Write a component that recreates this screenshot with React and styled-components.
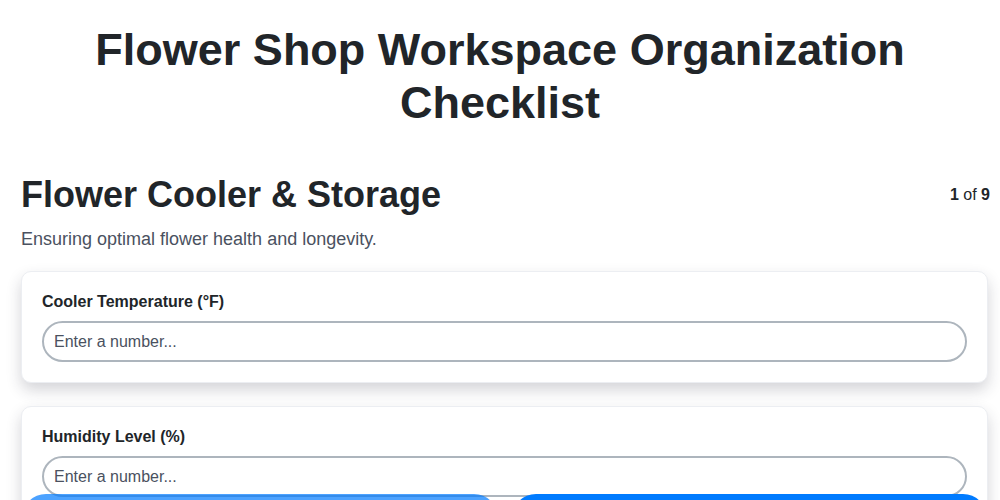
import styled, { createGlobalStyle } from "styled-components";

const GlobalStyle = createGlobalStyle`
  body {
    margin: 0;
    background: #ffffff;
    font-family: "Liberation Sans", Arial, sans-serif;
    color: #212529;
  }
  * { box-sizing: border-box; }
`;

const Page = styled.div`
  padding-bottom: 80px;
`;

const Title = styled.h1`
  margin: 23px 0 0;
  font-size: 45px;
  line-height: 53px;
  font-weight: 700;
  text-align: center;
  color: #212529;
`;

const Section = styled.section`
  padding: 0 10px 0 21px;
`;

const SectionHead = styled.div`
  display: flex;
  justify-content: space-between;
  align-items: center;
  margin-top: 44px;
`;

const SectionTitle = styled.h2`
  margin: 0;
  font-size: 36px;
  line-height: 44px;
  font-weight: 700;
`;

const Counter = styled.span`
  font-size: 16px;
  color: #212529;

  & b {
    font-weight: 700;
  }
`;

const Description = styled.p`
  margin: 11px 0 0;
  font-size: 18px;
  line-height: 22px;
  color: #4a5160;
`;

const Fields = styled.div`
  display: flex;
  flex-direction: column;
  gap: 23px;
  margin-top: 21px;
  padding-right: 2px;
`;

const Card = styled.div`
  background: #ffffff;
  border: 1px solid #eceef2;
  border-radius: 10px;
  padding: 21px 20px 20px;
  box-shadow: 0 7px 15px rgba(40, 40, 60, 0.2);
`;

const Label = styled.label`
  display: block;
  font-size: 16px;
  font-weight: 700;
  line-height: 18px;
  margin-bottom: 10px;
  color: #212529;
`;

const Input = styled.input`
  display: block;
  width: 100%;
  height: 41px;
  padding: 0 10px;
  border: 2px solid #adb5bd;
  border-radius: 21px;
  font-family: "Liberation Sans", Arial, sans-serif;
  font-size: 16px;
  color: #212529;
  background: #ffffff;
  outline: none;

  &::placeholder {
    color: #4a5160;
  }
`;

const Footer = styled.div`
  position: fixed;
  left: 0;
  right: 0;
  bottom: -42px;
  display: flex;
  gap: 14px;
  padding: 0 13px 0 22px;
`;

const NavButton = styled.button`
  flex: 1;
  height: 48px;
  padding: 20px 0 0;
  border: none;
  border-radius: 24px;
  background: #007bff;
  opacity: ${(p) => (p.disabled ? 0.7 : 1)};
  color: #ffffff;
  font-family: "Liberation Sans", Arial, sans-serif;
  font-size: 16px;
  font-weight: 700;
`;

const fields = [
  { id: "temp", label: "Cooler Temperature (°F)" },
  { id: "humidity", label: "Humidity Level (%)" },
];

export default function App() {
  return (
    <>
      <GlobalStyle />
      <Page>
        <Title>
          Flower Shop Workspace Organization
          <br />
          Checklist
        </Title>
        <Section>
          <SectionHead>
            <SectionTitle>Flower Cooler &amp; Storage</SectionTitle>
            <Counter>
              <b>1</b> of <b>9</b>
            </Counter>
          </SectionHead>
          <Description>Ensuring optimal flower health and longevity.</Description>
          <Fields>
            {fields.map((f) => (
              <Card key={f.id}>
                <Label htmlFor={f.id}>{f.label}</Label>
                <Input id={f.id} type="number" placeholder="Enter a number..." />
              </Card>
            ))}
          </Fields>
        </Section>
      </Page>
      <Footer>
        <NavButton disabled>Previous</NavButton>
        <NavButton>Next</NavButton>
      </Footer>
    </>
  );
}
